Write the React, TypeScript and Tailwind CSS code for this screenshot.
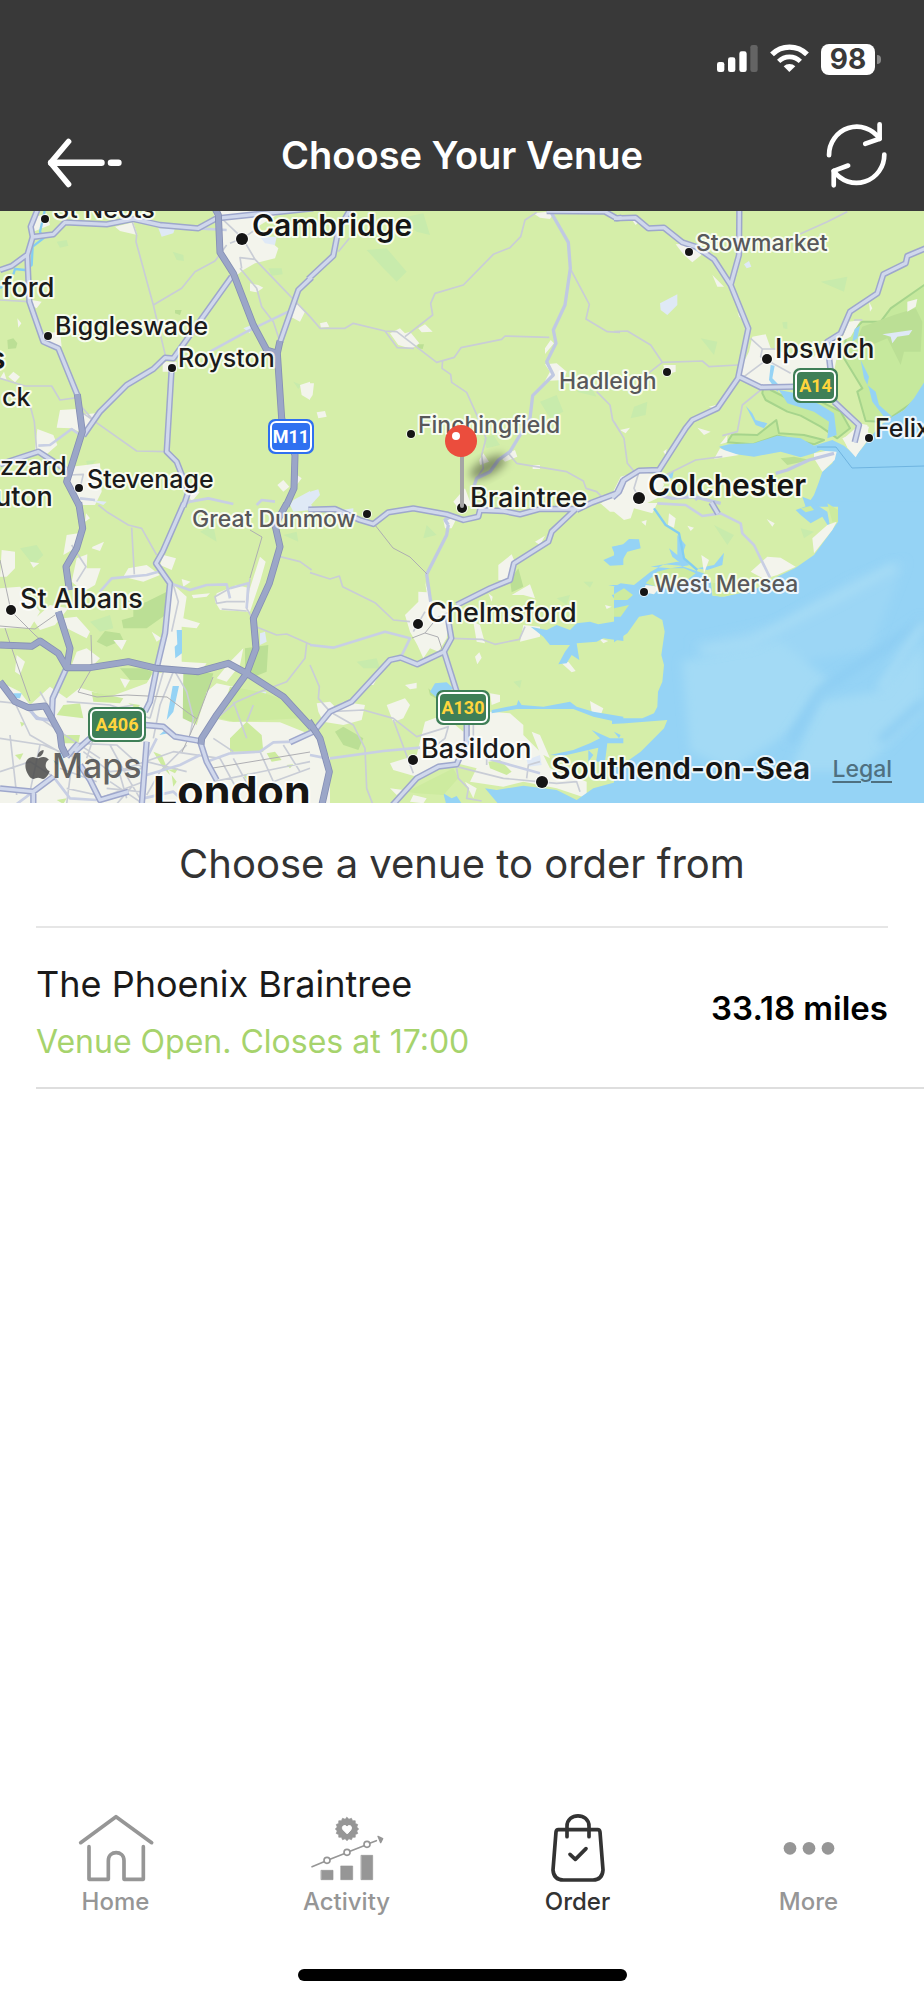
import type { ReactNode } from "react";
import { FaApple } from "react-icons/fa";

interface Tile {
  x: number;
  y: number;
  park?: string;
  reserve?: string;
  forest?: string;
  urban?: string;
  pale?: string;
  sea?: string;
  island?: string;
  green?: string;
  river?: string;
  lane?: string;
  street?: string;
  road?: string;
  trunk?: string;
  motorway?: string;
}

interface Place {
  name: string;
  x: number;
  y: number;
  kind: "city" | "town" | "place" | "village";
  dot?: [number, number, number];
}

// The map is stored as six tiles, each drawn at three units to the pixel.
const tiles: Tile[] = [
  {
    x: 0,
    y: -6,
    park: "M518 140L550 150 552 168 530 165ZM170 110L200 105 205 122 180 128ZM805 190L845 190 848 208 815 212ZM880 530L905 540 895 552ZM258 768L290 765 265 790Z",
    forest: "M22 405L40 400 52 415 48 430 24 432ZM525 315L545 315 540 330 525 325Z",
    urban:
      "M640 18L850 18 765 70 800 100 835 130 825 160 765 175 730 195 705 215 690 170 660 150ZM345 65L400 52 412 90 360 78ZM750 235L775 240 790 248 770 262 750 258ZM880 310L895 295 915 320 900 350 872 335ZM180 615L230 612 240 630 285 625 260 690 215 670 170 668ZM112 672L160 690 172 720 140 748 105 735ZM52 340L64 355 55 368ZM25 515L40 500 60 515 45 532ZM95 285L125 290 110 310 92 300ZM0 520L12 500 20 525ZM900 540L930 530V585L905 570ZM215 785L300 775 305 860 285 900H235L205 850ZM832 840L850 825 868 845 850 860ZM95 40L140 25 150 60 100 80ZM135 385L180 380 185 425 135 410ZM488 470H530V500H488ZM878 800L905 820 890 840ZM560 860L600 860 575 890Z",
    pale: "M475 70L525 70 520 85 485 95ZM780 95L830 95 825 120 795 115ZM730 370L755 360 750 385ZM880 885L930 858V900H870ZM270 885L320 890 310 900Z",
    river: "M134 18L120 80 130 100 98 125 95 180 75 195 45 192 40 208M10 240L0 250",
    lane: "M395 45L410 90 408 110 460 300 497 455M460 300L545 250 585 200 645 168 680 120M720 190L770 250 785 305 820 350 840 410M765 163L930 335M0 520L75 543 155 543 180 585 232 578M90 600L103 650 110 735M250 625L410 738 500 740M0 285L88 290M728 100L665 40M728 100L765 163 720 158 725 190M728 100L690 115M728 100L780 65M240 600L275 640M210 810L250 808 240 850",
    street: "M630 440L740 380 865 320M115 722L150 720 215 672 240 690M592 70L680 75M560 895L570 890 625 880 700 897M770 900L785 885 825 890M240 880L285 885",
    trunk:
      "M118 0L92 65 98 96 82 150 88 290 130 410 175 430 232 570M98 96L160 88 195 52 320 58 400 42 480 60 595 70 650 40 940 10M0 195L35 183 80 150M695 215L520 460 495 458 460 492 380 540 300 620 250 692M515 490L500 740 530 770 565 860 550 905M935 217L895 255 840 412M0 778L115 740 200 795",
    motorway: "M640 0L655 30 660 142 700 205 760 360 800 435 832 445 845 640 885 750 882 850 858 903M840 408L832 445M232 568L247 680 200 830 238 903",
  },
  {
    x: 310,
    y: -6,
    park: "M170 135L230 130 290 200 260 230 220 190ZM270 40L340 25 360 90 320 80ZM690 590L740 570 760 620 720 640ZM520 700L550 690 570 720 530 730ZM800 560L840 540 860 575Z",
    forest: "M322 418L342 418 338 432 322 430Z",
    urban:
      "M240 385L270 370 285 385 300 380 328 415 305 432 265 420ZM325 370L345 358 368 380 335 382ZM30 355L50 350 58 365 33 368ZM670 25L735 18 720 42 690 38ZM705 430L722 405 732 415 705 447ZM705 528L720 500 705 478 740 475 770 500 760 525ZM570 755L615 735 622 755 585 770ZM508 765L520 745 537 770 510 780ZM668 780H690V792H668ZM430 890L465 850 485 903H440ZM0 535L12 535 8 570 0 582ZM20 622L45 618 50 635 25 640ZM870 870L930 875V903H880Z",
    pale: "M0 860L25 853 30 870 0 903Z",
    lane: "M680 22L645 45 632 95 600 128 550 148 460 240 375 265 362 295 368 330 285 395M0 335L30 370 105 370 130 355 225 378 260 380 380 472 433 457 453 428 575 403 585 393 718 397M225 378L262 428 312 430M398 465L396 490 422 508 425 532 470 562 505 640 528 700 515 750 520 790 500 820M783 195L838 298 828 342 892 380 930 382M860 560L900 600 908 645 930 680M595 745L620 775 770 800 820 828 828 850 860 860 880 880M118 100L85 140",
    road: "M722 20L775 112 781 190 765 300 730 375 738 415 710 470 730 510 668 572 660 640 600 740 565 765 540 800 500 820 490 850",
    trunk: "M118 18L85 75 70 152 -5 222M710 18L885 20 920 40 935 38M800 915L845 893 920 865 940 825",
  },
  {
    x: 614,
    y: -6,
    park: "M60 605L100 590 95 630 50 640ZM505 352L520 350 520 372 508 370ZM260 400L310 410 300 450ZM620 230L700 215 690 260Z",
    reserve:
      "M745 350L800 350 830 310 945 230V530L900 590 835 635 800 650 755 648 730 560 745 550 690 460 695 400ZM450 525L470 555 560 600 620 590 680 620 708 670 670 700 620 665 560 632 520 620 455 585 445 565ZM340 712L355 688 430 690 487 645 495 685 570 690 630 705 600 718 490 692 415 718Z",
    forest: "M745 365L840 330 905 310 925 350 920 440 870 440 860 480 820 400 750 430 730 400ZM570 480L640 470 645 500 570 500ZM500 760L540 755 590 765 520 780Z",
    urban:
      "M415 395L455 388 470 430 530 450 600 455 640 400 680 395 660 500 540 500 535 548 440 545 380 520 385 480 405 440ZM185 118L240 115 262 150 235 172 210 150ZM295 210L330 245 310 245ZM705 350L740 345 710 395 680 410ZM685 700L720 685 735 655 760 660 765 700 740 735 725 757 700 725ZM0 855L20 815 75 800 140 810 150 840 130 880 80 903H0ZM148 480H185V500L155 510ZM18 675L48 668 35 685ZM250 668L290 680 270 690ZM880 290L910 282 905 305 880 320ZM765 290L775 310 768 320ZM50 40L75 50 65 60ZM285 605L315 598 305 612ZM148 740L158 732 155 750ZM370 320L385 345 375 335Z",
    pale: "M138 295L190 268 190 300 160 330 140 315ZM390 178L405 168 412 185 398 190ZM805 388L895 375 885 390 850 395 835 415 830 395Z",
    sea: "M935 525L900 580 870 615 835 635 800 660 775 690 740 735 725 752 690 722 655 705 600 722 560 700 490 692 420 715 345 718 315 725 345 745 420 755 500 740 560 757 600 745 620 735 665 745 655 775 625 800 615 830 600 870 590 885 565 875 575 905H935ZM495 555L545 565 620 600 660 625 668 690 640 700 645 650 600 620 520 595ZM395 602L415 625 425 645 460 655 450 670 425 660ZM470 480L482 482 475 520 500 545 490 560 465 525ZM740 465L765 515 760 540 785 560 795 600 835 635 810 635 775 590 765 550 750 520ZM722 372L738 362 730 400 715 410ZM155 820L180 795 175 820Z",
    island: "M600 745L635 738 668 740 662 765 625 800 600 760ZM300 762L318 730 330 735 375 750ZM318 718L340 690V712ZM690 700L735 660 765 665 755 705 725 757 700 728Z",
    lane: "M0 380L40 378 110 420 145 472 265 468 285 485 372 480M145 472L90 515M0 650L30 700 40 775 65 805M440 555L385 600 370 680 325 692M155 810L245 765 325 755M530 100L640 50 700 20M485 432H445L410 400M445 432L440 455 530 505M390 515L460 463M720 345L745 345M75 800L60 850 75 880",
    road: "M485 805L520 795 585 765 660 745M130 870L175 880 240 875 320 895M250 885L230 860",
    trunk:
      "M0 40L65 38 103 70 150 68 205 112 245 125 300 163 350 240 403 370 372 520 310 610 235 645 215 670 135 795 75 797 30 825 15 860 -5 878M376 18L375 150 350 240M375 515L440 547 545 545M660 590L735 660 722 712M935 130L880 153 875 175 808 208 790 265 708 320 680 385 640 410 650 500",
  },
  {
    x: 0,
    y: 294,
    park: "M60 130L110 120 130 150 100 180ZM600 80L640 60 650 110ZM850 90L890 80 895 110ZM270 350L330 330 340 370 300 380Z",
    forest:
      "M400 305L440 290 505 258 510 320 440 370 370 370 365 345 400 335ZM290 410L315 378 360 385 370 405 320 425ZM360 490L430 490 455 500 450 525 390 525ZM548 500L640 505 625 560 590 640 560 690 548 640ZM735 430L805 420 800 500 750 520 735 480Z",
    urban:
      "M0 530L60 560 90 600 150 545 200 580 240 548 330 575 440 535 455 510 520 495 550 500 548 640 590 660 620 560 650 535 700 545 640 640 690 650 840 652 935 690V903H0ZM515 235L560 275 550 340 600 355 590 370 545 365 545 470 620 475 600 500 470 490 500 330ZM5 135L45 140 45 190 20 215 0 215ZM0 250L60 245 120 320 90 370 0 370ZM150 300L205 310 165 360 120 375 100 345ZM230 160L262 148 260 190 302 190 285 240 250 260 215 230ZM200 90L235 85 225 130 190 150ZM278 125L312 110 300 138 275 130ZM385 190L440 180 480 210 430 230 370 215ZM490 150L528 160 515 195 480 180ZM780 155L797 170 780 230 750 320 660 315 645 290 650 265 710 240 750 250ZM190 340L230 335 270 380 260 400 200 370ZM230 440L260 430 300 460 280 480 215 480ZM50 450L75 470 60 510 45 500ZM340 405H380L365 435ZM690 470L730 430 720 480 680 530 650 520ZM90 170L118 175 100 188ZM545 222L572 230 550 245ZM258 25L270 40 255 50ZM575 270L630 265 620 275 580 280ZM455 380L485 400 470 410ZM360 520L390 525 375 550Z",
    green:
      "M690 700L740 650 785 690 790 740 690 740ZM190 600L240 595 250 640 170 630ZM170 690L240 690 235 715 190 715ZM690 545L780 560 870 590 900 640 700 650 660 640ZM45 750L70 745 60 765ZM460 740L485 750 510 810 490 790ZM505 795L535 790 525 805ZM800 745L825 740 845 765 815 770ZM730 810L745 805 740 825ZM855 850L875 865 860 880ZM170 885L200 880 190 897ZM515 810L530 830 520 845ZM60 650L75 655 65 665ZM275 560L370 580 360 595 280 590ZM385 595L420 600 410 612ZM860 780L880 778 870 790Z",
    pale: "M870 0H935V15L880 20ZM780 385L795 380 800 410 780 420ZM775 560H800L785 585Z",
    sea: "M530 375H546V445L526 460 524 425 532 418ZM518 543H537L520 620 500 645 508 600ZM478 690L495 675 505 685ZM40 565H65L60 580H45ZM160 765L175 775 168 780Z",
    lane: "M295 0L320 20 385 60 425 70 470 150M395 68L403 208M215 120L258 185 230 230M768 365L830 390 860 387 935 420M920 415L915 460 860 530 780 560 710 590 650 640M840 155L900 170 935 195M750 220L740 310 760 345M680 290L650 295 645 275 690 250M680 290L735 290M665 312L740 318M700 590L740 700M90 620L300 760M0 590L95 600M20 540L90 690 185 745M120 560L165 640M200 590L330 600 450 640M290 620L400 600M235 715L350 720 440 800M300 640L260 760M330 720L390 830 420 880M350 800L520 740 660 760M440 770L560 800M520 500L480 600 460 700M490 500L450 640M580 640L570 690M560 720L480 800 440 870M660 760L720 870M700 760L760 870M780 740L820 830 930 790M850 720L900 800M640 830L930 770M0 700L130 720 230 760M30 690L50 870M120 720L90 860M250 740L330 800 430 790M0 800L90 770 160 815M180 790L290 830M220 740L200 897M300 880L430 830M320 850L420 860M350 897L400 840M330 830L430 897M360 810L380 880M200 850L290 870M640 700L700 740M760 600L740 650M520 240L535 290 515 380M525 500L560 560 580 640",
    street: "M300 260L335 220 440 210 475 200M510 235L570 255 620 240 680 238 690 280M690 250L745 235 740 310M690 745L780 740 820 712 880 710M600 750L540 780 440 810M620 770L690 745M100 860L50 897M430 880L520 860 560 897M160 815L210 880 290 885M470 700L440 760",
    road: "M85 608L110 640 150 645 185 690",
    trunk:
      "M552 -6L488 140 468 175 510 235 495 385 470 490 450 590 435 620M440 710L425 903M200 488L158 580 155 640M435 660L490 665 525 695 600 708 620 770 650 825M0 850L100 860 160 815M100 860V903M270 700L225 740M240 780L270 825 300 885 385 860M870 712L940 680M200 755L235 715",
    motorway:
      "M236 -8L248 70 230 130 198 185 208 255M175 320L210 430 200 488M0 420L95 424 120 408 175 445 200 488 270 488 385 470 470 490 595 500 685 475 740 505 850 575 935 668M0 530L45 590 85 608 135 603 180 685 185 725 200 755M860 -4L825 60 840 125 808 235 760 340 768 430 740 505 650 630 605 700 603 718",
  },
  {
    x: 310,
    y: 294,
    park: "M140 470L200 460 210 490 160 490ZM820 230L850 230 840 248ZM610 530L635 525 630 550ZM350 60L380 90 340 100ZM740 280L780 270 770 300Z",
    forest: "M600 225L625 190 640 245 605 262ZM75 680L100 665 160 700 145 735 100 720ZM355 550L375 570 385 585 360 570ZM535 770L565 765 605 800 590 810 540 790Z",
    urban:
      "M285 330L325 290 325 260 350 262 345 230 365 295 420 320 410 400 385 440 360 430 340 460 322 420 300 380ZM565 180L605 148 612 165 600 225 565 225ZM605 270L660 238 675 280 640 270ZM640 360L690 365 690 395 630 410ZM490 350L510 360 525 415 500 410ZM495 455L508 442 515 458 502 478ZM755 475L775 470 797 498 785 502ZM20 595L60 590 75 605 100 590 165 600 155 645 100 660 40 650 25 620ZM230 600L285 580 300 600 280 640 250 652ZM285 540L320 533V550L300 553ZM345 650L400 630 460 680 480 600 540 620 600 625 640 660 640 690 700 750 720 790 830 830 830 880 740 850 640 830 580 845 480 830 500 790 440 775 350 795 320 815 250 795 240 775 320 750ZM540 565L570 570 570 590 545 600ZM840 588L880 610 870 635 845 620ZM665 680L690 690 720 760 690 745ZM865 398L895 408 880 415ZM885 300L905 305 890 312ZM870 -6H935V20L900 20ZM675 110L705 92 690 120ZM400 45L440 40 425 70 405 70ZM175 540L215 495 190 540ZM535 265L548 275 545 290ZM0 640L60 760V903H-10ZM240 850L280 855 260 870ZM310 870L350 880 340 895 300 890ZM465 830L500 850 490 880Z",
    green: "M290 860L430 790 445 820 400 870 320 865ZM535 770L570 765 605 800 590 810 540 790Z",
    pale: "M650 765L690 750 695 780 655 785ZM95 15L130 10V25Z",
    sea: "M662 365L710 375 740 360 780 375 800 355 840 350 865 358 940 345V408L880 400 860 410 800 415 808 465 785 450 770 475 745 478 765 440 780 420 720 420 700 395ZM880 165L915 150 905 125 940 118V180L900 182ZM895 240H940V250ZM905 270L940 262V300L915 285ZM360 560L375 535 410 532 430 550 385 582ZM545 615L620 600 625 585 635 600 700 605 780 590 800 605 850 620 940 635V655L850 635 790 612 620 612 545 625ZM720 750L790 735 840 715 870 700 845 675 900 700 940 700V715L892 715 885 770 858 770 865 728 760 752ZM835 735L850 750 835 770ZM525 850L560 855 640 842 740 855 800 885 850 850 940 825V903H570ZM400 865L425 880 440 873 460 903H410Z",
    lane: "M0 203L60 222 88 213 98 245 195 293 250 345 300 350M424 400L515 403 555 418 628 403 645 365M440 785L580 820 740 835 800 830 810 860M0 480L28 545 25 580 60 620 130 660 165 730 170 850 188 897M250 645L310 805M60 620L160 615 250 640 320 695 400 670 415 665 405 700 380 720M490 660V720M440 790L445 820 475 850 470 880 515 888M530 720L530 780M650 820L655 780 690 770M310 380L345 320M380 340L420 320",
    street: "M0 420L70 428 225 380 300 400 272 458M60 760L220 738 330 728M530 760L690 805M0 750L40 758",
    road: "M415 60L410 90 350 208 362 290M415 60L405 45 420 35",
    trunk:
      "M-5 14L75 12 150 45 190 57 235 22 310 10 410 28 460 45 505 35 510 15 580 18 630 28 690 12 800 12M810 0L725 80 715 110 612 175 600 225 540 250 440 300M412 330L424 400 402 440 322 478 272 458 240 465 125 590 60 620 15 675M402 440L440 560 470 660V710L440 778 385 785 320 820 245 903",
    motorway: "M-4 648L30 700 58 800 35 903",
  },
  {
    x: 614,
    y: 294,
    park: "M300 60L360 90 340 120ZM560 70L600 80 570 100Z",
    urban: "M-10 -6H130L115 25 60 10 50 40 30 45 0 20ZM165 25L185 40 180 68 162 60ZM220 62L240 68 230 78ZM458 42L482 55 475 65Z M82 50L98 45 95 62Z",
    sea: "M672 -10V50L640 95 600 150 545 188 490 215 420 255 330 275 295 272 290 225 268 205 200 182 150 178 110 200 60 240 20 235 0 245V412L40 385 75 335 115 328 145 345 152 380 142 450 150 480 145 530 132 560 130 605 120 625 85 640H-6V657L35 655 160 645 150 670 80 740 45 765 0 790V903H940V-10ZM0 125L25 120 45 102 75 103 80 130 40 140 20 175 0 160ZM545 15L600 -5 640 20 650 75 625 35 590 55 560 30ZM250 190L300 180 330 143 325 180 280 195ZM165 130L190 150 190 90 215 120 205 150 225 180 200 175 175 155ZM110 185L190 170 230 180 170 190ZM0 680L20 690 15 700Z",
    island: "M640 60L668 50 655 75 600 145 595 100ZM410 200L460 155 500 158 545 185 490 210 450 222ZM262 150L285 165 270 205ZM88 262L95 240 140 245 120 268Z",
    green: "M95 235L130 200 170 190 210 190 245 205 200 240 140 250ZM0 268L30 250 57 270 40 285 0 285ZM0 310L45 300 20 335 0 335ZM295 235L400 225 400 260 320 275 298 270ZM560 10L590 3 600 15 575 22ZM640 -5L672 15 672 50 655 50Z",
    river: "M120 10L155 60 195 85 210 160 250 195",
    street: "M130 -5L215 0 265 33 320 25 380 55 385 85 420 120 468 218",
    trunk: "M292 -8L312 26",
  },
];

const places: Place[] = [
  { name: "St Neots", x: 53, y: 7, kind: "place", dot: [45, 8, 4] },
  { name: "Cambridge", x: 252, y: 25, kind: "city", dot: [242, 28, 6] },
  { name: "ford", x: 2, y: 86, kind: "town" },
  { name: "Biggleswade", x: 55, y: 124, kind: "place", dot: [48, 125, 4] },
  { name: "Royston", x: 178, y: 156, kind: "place", dot: [172, 157, 4] },
  { name: "s", x: -11, y: 158, kind: "city" },
  { name: "ck", x: 2, y: 195, kind: "place" },
  { name: "zzard", x: 0, y: 264, kind: "place" },
  { name: "uton", x: -5, y: 295, kind: "town" },
  { name: "Stevenage", x: 87, y: 277, kind: "place", dot: [79, 277, 4] },
  { name: "Stowmarket", x: 696, y: 40, kind: "village", dot: [689, 41, 4] },
  { name: "Hadleigh", x: 559, y: 178, kind: "village", dot: [667, 161, 4] },
  { name: "Finchingfield", x: 418, y: 222, kind: "village", dot: [411, 223, 4] },
  { name: "Ipswich", x: 775, y: 147, kind: "town", dot: [767, 148, 5] },
  { name: "Felixs", x: 875, y: 226, kind: "place", dot: [869, 227, 4] },
  { name: "Colchester", x: 648, y: 285, kind: "city", dot: [639, 287, 6] },
  { name: "Braintree", x: 470, y: 296, kind: "town", dot: [462, 297, 5] },
  { name: "Great Dunmow", x: 192, y: 316, kind: "village", dot: [367, 303, 4] },
  { name: "St Albans", x: 20, y: 397, kind: "town", dot: [11, 399, 5] },
  { name: "Chelmsford", x: 427, y: 411, kind: "town", dot: [418, 413, 5] },
  { name: "West Mersea", x: 654, y: 381, kind: "village", dot: [644, 381, 4] },
  { name: "Basildon", x: 421, y: 547, kind: "town", dot: [413, 549, 5] },
  { name: "Southend-on-Sea", x: 551, y: 568, kind: "city", dot: [542, 571, 6] },
];

const placeStyles: Record<Place["kind"], string> = {
  city: "text-[30px] font-semibold fill-[#151515]",
  town: "text-[27px] font-medium fill-[#1b1b1b]",
  place: "text-[25px] font-medium fill-[#1b1b1b]",
  village: "text-[23px] font-medium fill-[#58585a]",
};

const shields = [
  { name: "M11", x: 268, y: 208, w: 46, box: "fill-[#2f70f0]", text: "fill-white" },
  { name: "A14", x: 793, y: 157, w: 45, box: "fill-[#3f7f57]", text: "fill-[#ffd53d]" },
  { name: "A406", x: 88, y: 496, w: 58, box: "fill-[#3f7f57]", text: "fill-[#ffd53d]" },
  { name: "A130", x: 436, y: 479, w: 54, box: "fill-[#3f7f57]", text: "fill-[#ffd53d]" },
];

function Layer({ pick, className }: { pick: keyof Tile; className: string }) {
  return (
    <g className={className} strokeLinejoin="round">
      {tiles.map((tile) => (
        <path
          key={`${tile.x}-${tile.y}`}
          transform={`translate(${tile.x} ${tile.y}) scale(0.33333)`}
          d={(tile[pick] as string | undefined) ?? ""}
        />
      ))}
    </g>
  );
}

function VenueMap() {
  return (
    <section aria-label="Map" className="relative overflow-hidden">
      <svg viewBox="0 0 924 592" className="block w-full bg-[#d5eea9]">
        <defs>
          <filter id="soft" x="-50%" y="-50%" width="200%" height="200%">
            <feGaussianBlur stdDeviation="5" />
          </filter>
        </defs>
        <Layer pick="park" className="fill-[#c8ebac]" />
        <Layer pick="reserve" className="fill-[#c6e99d] stroke-[#a6d48c] stroke-[6]" />
        <Layer pick="forest" className="fill-[#bbdf95]" />
        <Layer pick="urban" className="fill-[#f3f4ec]" />
        <Layer pick="pale" className="fill-[#dfe9f6]" />
        <Layer pick="sea" className="fill-[#95d3f5]" />
        <g className="fill-[#a3daf5]" filter="url(#soft)">
          <path d="M690 432L780 412 850 370 905 350 870 440 800 450 720 445Z" opacity="0.5" />
          <path d="M682 450L780 430 830 470 790 520 730 560 690 540Z" />
          <path d="M924 430L880 480 820 490 790 560 860 560 924 500Z" />
        </g>
        <g fill="none" className="stroke-[#8dcdf3] stroke-[8]" filter="url(#soft)">
          <path d="M924 410L880 440 820 480 790 530M924 490L880 530" />
        </g>
        <g fill="none" className="stroke-[#a9ddf5] stroke-[7]" filter="url(#soft)">
          <path d="M700 440L750 432 800 405 850 380 895 355M924 412L905 440 880 478" />
        </g>
        <Layer pick="island" className="fill-[#f3f4ec]" />
        <Layer pick="green" className="fill-[#cdeb9f]" />
        <g fill="none">
          <path d="M817 236L836 236 852 257 924 255" className="stroke-[#6fb4e0] stroke-1" />
          <Layer pick="river" className="stroke-[#84cdf2] stroke-[7]" />
          <Layer pick="lane" className="stroke-[#c9cdd6] stroke-[5]" />
          <Layer pick="street" className="stroke-[#c8cfe4] stroke-[8]" />
          <Layer pick="road" className="stroke-[#c0c9e2] stroke-[10]" />
          <path
            d="M250 319L262 326 250 367M0 415L35 418 55 404M0 349L11 400 35 424 43 431M5 417L15 447 30 490M91 424L92 457 78 481 97 486 127 484 167 486 187 501 197 508M213 466L197 508 182 541M213 557L310 541M375 314L393 337 410 346 427 363M412 427L425 422 438 426 443 441M425 422L433 412"
            className="stroke-[#aeaeb2] stroke-1"
          />
          <Layer pick="trunk" className="stroke-[#9ea7cc] stroke-[19]" />
          <Layer pick="trunk" className="stroke-[#d0d8ec] stroke-[10]" />
          <Layer pick="motorway" className="stroke-[#858fb4] stroke-[21]" />
          <Layer pick="motorway" className="stroke-[#9ba6c8] stroke-[16]" />
        </g>

        {shields.map((s) => (
          <g key={s.name}>
            <rect x={s.x} y={s.y} width={s.w} height="35" rx="7" className={s.box} />
            <rect x={s.x + 3} y={s.y + 3} width={s.w - 6} height="29" rx="5" fill="none" className="stroke-white stroke-2" />
            <text x={s.x + s.w / 2} y={s.y + 24} textAnchor="middle" className={`font-['Roboto',sans-serif] text-[18px] font-bold ${s.text}`}>
              {s.name}
            </text>
          </g>
        ))}

        <g className="stroke-white/80 stroke-[4]" strokeLinejoin="round" paintOrder="stroke">
          {places.map((p) => (
            <g key={p.name}>
              {p.dot && <circle cx={p.dot[0]} cy={p.dot[1]} r={p.dot[2]} className="fill-[#151515] stroke-2" />}
              <text x={p.x} y={p.y} className={placeStyles[p.kind]}>
                {p.name}
              </text>
            </g>
          ))}
          <text x="153" y="596" className="fill-[#151515] text-[43px] font-bold">
            London
          </text>
        </g>

        <ellipse cx="488" cy="256" rx="20" ry="8" transform="rotate(-28 488 256)" className="fill-black/40" filter="url(#soft)" />
        <rect x="460" y="240" width="4" height="57" rx="2" className="fill-[#a5a5a5]" />
        <circle cx="461" cy="230" r="16" className="fill-[#eb4d3d]" />
        <circle cx="456" cy="225" r="4" className="fill-white" />

        <g className="fill-[#4a4a4a]/85">
          <FaApple x="21" y="537" size={33} className="text-[#4a4a4a]/85" />
          <text x="52" y="567" className="text-[34px] font-medium">
            Maps
          </text>
        </g>
      </svg>
      <a href="#legal" className="absolute right-8 bottom-5 text-[23px] leading-7 font-medium text-[#4f7080] underline underline-offset-4">
        Legal
      </a>
    </section>
  );
}

function StatusBar() {
  return (
    <div className="flex items-center justify-end gap-3 pt-[42px] pr-[43px]">
      <svg viewBox="48 36 123 102" className="h-[34px] w-[41px] fill-white">
        <rect x="48" y="96" width="22" height="30" rx="7" />
        <rect x="81" y="82" width="22" height="44" rx="7" />
        <rect x="115" y="64" width="22" height="62" rx="7" />
        <rect x="148" y="45" width="22" height="81" rx="7" className="fill-[#646464]" />
      </svg>
      <svg viewBox="208 36 117 102" className="h-[34px] w-[39px] fill-none stroke-white">
        <path d="M214 73A74 74 0 0 1 319 73" strokeWidth="16" />
        <path d="M234 94A46 46 0 0 1 299 94" strokeWidth="14" />
        <path d="M266 126L249 109A25 25 0 0 1 284 109Z" className="fill-white stroke-none" />
      </svg>
      <div className="flex items-center gap-0.5">
        <span className="flex h-[31px] w-[54px] items-center justify-center rounded-lg bg-white text-[28px] leading-none font-bold text-[#393939]">
          98
        </span>
        <span className="h-[9px] w-1 rounded-r-full bg-[#8a8a8a]" />
      </div>
    </div>
  );
}

function Header() {
  return (
    <header className="bg-[#393939] pb-5 text-white">
      <StatusBar />
      <div className="mt-[43px] grid h-[72px] grid-cols-[1fr_auto_1fr] items-center px-9">
        <button type="button" aria-label="Back" className="justify-self-start">
          <svg viewBox="18 5 262 203" className="h-[68px] w-[87px] fill-none stroke-white" strokeLinecap="round" strokeLinejoin="round">
            <path d="M116 66L62 130 116 195" strokeWidth="17" />
            <path d="M64 130H215M244 130H266" strokeWidth="20" />
          </svg>
        </button>
        <h1 className="text-[38px] leading-[48px] font-semibold">Choose Your Venue</h1>
        <button type="button" aria-label="Refresh" className="justify-self-end">
          <svg viewBox="375 275 188 203" className="h-[68px] w-[63px] fill-none stroke-white" strokeWidth="14" strokeLinecap="round" strokeLinejoin="round">
            <path d="M387 377A83 84 0 0 1 538 328" />
            <path d="M538 285V328L495 343" />
            <path d="M552 375A83 84 0 0 1 401 424" />
            <path d="M401 467V424L444 408" />
          </svg>
        </button>
      </div>
    </header>
  );
}

function TabIcon({ box, children }: { box: string; children: ReactNode }) {
  return (
    <svg viewBox={box} className="h-[72px] w-[90px]" fill="none" stroke="currentColor" strokeLinecap="round" strokeLinejoin="round">
      {children}
    </svg>
  );
}

// 16-point rosette behind the heart
const rosette = Array.from({ length: 32 }, (_, i) => {
  const r = i % 2 ? 30 : 35;
  const a = (i * Math.PI) / 16;
  return `${1040 + r * Math.sin(a)},${117 - r * Math.cos(a)}`;
}).join(" ");

const tabs = [
  {
    label: "Home",
    icon: (
      <TabIcon box="211 66 270 216">
        <path strokeWidth="11" d="M240 158L346 80 453 158M265 170V268H323V212C323 180 370 180 370 212V268H428V170" />
      </TabIcon>
    ),
  },
  {
    label: "Activity",
    icon: (
      <TabIcon box="905 66 270 216">
        <polygon points={rosette} fill="currentColor" strokeWidth="2" />
        <path d="M1040 131L1028 119C1021 110 1034 101 1040 111C1046 101 1059 110 1052 119Z" fill="white" stroke="white" strokeWidth="3" />
        <path d="M935 230L971 215M989 208L1031 191M1049 184L1091 167M1108 160L1128 152" strokeWidth="5" />
        <circle cx="980" cy="211" r="9" strokeWidth="5" />
        <circle cx="1040" cy="187" r="9" strokeWidth="5" />
        <circle cx="1100" cy="163" r="9" strokeWidth="5" />
        <path d="M1133 139L1147 146 1141 158Z" fill="currentColor" strokeWidth="4" />
        <path d="M963 241H998V269H963ZM1022 228H1057V269H1022ZM1083 196H1117V269H1083Z" fill="currentColor" strokeWidth="2" />
      </TabIcon>
    ),
  },
  {
    label: "Order",
    active: true,
    icon: (
      <TabIcon box="211 66 270 216">
        <path
          strokeWidth="11"
          d="M287 119H405Q411 119 412 126L421 240Q419 269 391 270H302Q273 269 271 240L280 126Q281 119 287 119ZM313 140V109C313 67 379 67 379 109V140M322 193L338 208 370 176"
        />
      </TabIcon>
    ),
  },
  {
    label: "More",
    icon: (
      <TabIcon box="905 66 270 216">
        <g fill="currentColor" stroke="none">
          <circle cx="983" cy="175" r="19" />
          <circle cx="1040" cy="175" r="19" />
          <circle cx="1097" cy="175" r="19" />
        </g>
      </TabIcon>
    ),
  },
];

export default function App() {
  return (
    <div className="flex min-h-screen flex-col bg-white font-['Inter',sans-serif]">
      <Header />
      <VenueMap />

      <main>
        <h2 className="mx-9 border-b-2 border-[#e6e6e6] pt-[35px] pb-9 text-center text-[40px] leading-[52px] text-[#333]">
          Choose a venue to order from
        </h2>
        <ul>
          <li className="ml-9 border-b-2 border-[#dedede]">
            <button type="button" className="flex w-full items-start justify-between pt-8 pr-9 pb-[23px] text-left">
              <span className="flex flex-col gap-3">
                <span className="text-[36px] leading-[48px] text-[#1a1a1a]">The Phoenix Braintree</span>
                <span className="text-[32px] leading-[44px] text-[#a6d36c]">Venue Open. Closes at 17:00</span>
              </span>
              <span className="text-[33px] leading-24 font-semibold text-black">33.18 miles</span>
            </button>
          </li>
        </ul>
      </main>

      <nav className="mt-auto grid grid-cols-4">
        {tabs.map((tab) => (
          <a
            key={tab.label}
            href={`#${tab.label.toLowerCase()}`}
            className={`flex flex-col items-center gap-1 ${tab.active ? "text-[#333]" : "text-[#969696]"}`}
          >
            {tab.icon}
            <span className="text-[24px] leading-7 font-medium">{tab.label}</span>
          </a>
        ))}
      </nav>
      <div className="mx-auto mt-[53px] mb-[19px] h-3 w-[329px] rounded-full bg-black" />
    </div>
  );
}
